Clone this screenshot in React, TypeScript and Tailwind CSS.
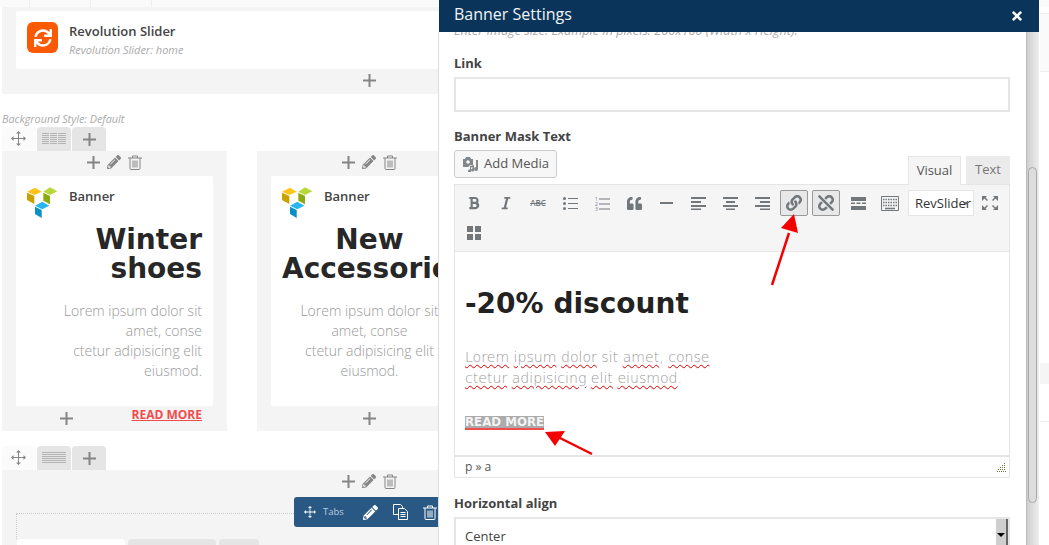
import type { ReactNode } from 'react'
import {
  FaBold,
  FaItalic,
  FaQuoteLeft,
  FaLink,
  FaUnlink,
  FaPencilAlt,
  FaSync,
  FaTimes,
} from 'react-icons/fa'

function Plus({ className = 'text-[#858585]' }: { className?: string }) {
  return (
    <svg width="13" height="13" viewBox="0 0 13 13" className={className}>
      <path d="M5.5 0h2v5.5H13v2H7.5V13h-2V7.5H0v-2h5.5z" fill="currentColor" />
    </svg>
  )
}

function Move({ color = '#858585', size = 15 }: { color?: string; size?: number }) {
  return (
    <svg width={size} height={size} viewBox="0 0 15 15" fill={color}>
      <path d="M7 2h1v11H7zM2 7h11v1H2z" />
      <path d="M7.5 0 10 2.5H5zM7.5 15 5 12.5h5zM0 7.5 2.5 5v5zM15 7.5 12.5 10V5z" />
    </svg>
  )
}

function Trash({ color = '#858585', size = 14 }: { color?: string; size?: number }) {
  return (
    <svg width={size} height={size + 1} viewBox="0 0 14 15" fill="none" stroke={color} strokeWidth="1">
      <path d="M0 3h14M4.5 3V1h5v2M2 3v10.5a1 1 0 0 0 1 1h8a1 1 0 0 0 1-1V3M5 5.5v7M7 5.5v7M9 5.5v7" />
    </svg>
  )
}

function Lines({ full }: { full?: boolean }) {
  return (
    <svg width="24" height="12" viewBox="0 0 24 12" fill="#b4b4b4">
      {[0, 2, 4, 6, 8, 10].map((y) => (
        <rect key={y} x="0" y={y} width="24" height="1" />
      ))}
      {!full && <path d="M7 0h1v12H7zM15 0h1v12h-1z" fill="#e5e5e5" />}
    </svg>
  )
}

function VcLogo() {
  return (
    <svg width="31" height="31" viewBox="0 0 31 31" className="shrink-0">
      <path d="M0 4.7 8 .7l6.7 4-7.4 3.3z" fill="#fcc419" />
      <path d="M0 5.7 7.3 9v8L0 13z" fill="#c9a200" />
      <path d="M16.3 4.7 23 .3l7.3 4L23 8z" fill="#b6d83a" />
      <path d="M16.3 5.7 23 9v8.3l-6.7-3.6z" fill="#8aab10" />
      <path d="m8 18.7 7.3-4 7 4-7 3.6z" fill="#29b6f0" />
      <path d="m8 19.7 6.7 3.3v8L8 27z" fill="#0a8fc5" />
    </svg>
  )
}

function ColumnTabs({ full }: { full?: boolean }) {
  return (
    <div className="flex h-[24px] gap-px">
      <div className="w-[34px] flex items-center justify-center pb-[2px] pr-[2px] bg-[#fbfbfb] rounded-t-sm">
        <Move />
      </div>
      <div className="w-[34px] flex items-center justify-center bg-[#e5e5e5] rounded-t-sm">
        <Lines full={full} />
      </div>
      <div className="w-[34px] flex items-center justify-center bg-[#e5e5e5] rounded-t-sm">
        <Plus />
      </div>
    </div>
  )
}

function ControlIcons() {
  return (
    <div className="flex items-center justify-center gap-[7px] h-[22px]">
      <Plus />
      <FaPencilAlt size={14} className="text-[#858585]" />
      <Trash />
    </div>
  )
}

function BannerColumn({
  title,
  align,
  plusClass,
  children,
}: {
  title: ReactNode
  align: string
  plusClass: string
  children?: ReactNode
}) {
  return (
    <div className="w-[225px] h-[280px] shrink-0 bg-[#f4f4f4] flex flex-col">
      <div className="h-[25px]">
        <ControlIcons />
      </div>
      <div className={`mx-[14px] h-[230px] bg-white rounded-[2px] px-[11px] pt-[11px] ${align}`}>
        <div className="flex items-center gap-[11px] h-[31px] text-left">
          <VcLogo />
          <span className="text-[13px] font-semibold text-[#444] relative -top-[6px]">Banner</span>
        </div>
        <h2 className="font-['DejaVu_Sans'] font-bold text-[28px] leading-[29px] text-[#272727] mt-[7px]">{title}</h2>
        <p className="mt-[18px] text-[14px] leading-[20px] font-light text-[#999]">
          Lorem ipsum dolor sit
          <br />
          amet, conse
          <br />
          ctetur adipisicing elit
          <br />
          eiusmod.
        </p>
        {children}
      </div>
      <div className={`flex pt-[6px] h-[25px] ${plusClass}`}>
        <Plus />
      </div>
    </div>
  )
}

type Tool = { icon: ReactNode; active?: boolean }

const tools: Tool[] = [
  { icon: <FaBold size={14} /> },
  { icon: <FaItalic size={14} /> },
  { icon: <span className="text-[8px] line-through font-semibold">ABC</span> },
  {
    icon: (
      <svg width="15" height="13" viewBox="0 0 15 13" fill="currentColor">
        <circle cx="1.500" cy="1.500" r="1.500" />
        <circle cx="1.500" cy="6.500" r="1.500" />
        <circle cx="1.500" cy="11.500" r="1.500" />
        <path d="M5 1h10v1H5zM5 6h10v1H5zM5 11h10v1H5z" />
      </svg>
    ),
  },
  {
    icon: (
      <svg width="15" height="15" viewBox="0 0 15 15" fill="currentColor">
        <text x="0" y="5" fontSize="5">1</text>
        <text x="0" y="10" fontSize="5">2</text>
        <text x="0" y="15" fontSize="5">3</text>
        <path d="M4 2.500h11v1H4zM4 7.500h11v1H4zM4 12.500h11v1H4z" />
      </svg>
    ),
  },
  { icon: <FaQuoteLeft size={15} /> },
  { icon: <span className="block w-[13px] h-[2px] bg-current" /> },
  {
    icon: (
      <svg width="15" height="13" viewBox="0 0 15 13" fill="currentColor">
        <path d="M0 0h15v2H0zM0 4h10v2H0zM0 8h15v2H0zM0 11.500h10v1.500H0z" />
      </svg>
    ),
  },
  {
    icon: (
      <svg width="15" height="13" viewBox="0 0 15 13" fill="currentColor">
        <path d="M0 0h15v2H0zM3 4h9v2H3zM0 8h15v2H0zM3 11.500h9v1.500H3z" />
      </svg>
    ),
  },
  {
    icon: (
      <svg width="15" height="13" viewBox="0 0 15 13" fill="currentColor">
        <path d="M0 0h15v2H0zM5 4h10v2H5zM0 8h15v2H0zM5 11.500h10v1.500H5z" />
      </svg>
    ),
  },
  { icon: <FaLink size={16} />, active: true },
  { icon: <FaUnlink size={16} />, active: true },
  {
    icon: (
      <svg width="15" height="13" viewBox="0 0 15 13" fill="currentColor">
        <path d="M0 0h15v4H0zM0 5.500h4v1.500H0zM5.500 5.500h4v1.500h-4zM11 5.500h4v1.500h-4zM0 9h15v4H0z" />
      </svg>
    ),
  },
  {
    icon: (
      <svg width="18" height="15" viewBox="0 0 18 15" fill="none" stroke="currentColor">
        <path d="M.5.500h17v14H.5z" />
        <path d="M2 3.500h14M2 6.500h14M2 9.500h14" strokeDasharray="1.500 1" strokeWidth="1.500" />
        <path d="M4 12.500h10" strokeWidth="1.500" />
      </svg>
    ),
  },
]

function Toolbar() {
  return (
    <div className="h-[68px] bg-[#f5f5f5] border border-[#e5e5e5] pl-[5px] pt-[5px] flex flex-wrap content-start gap-x-[4px] gap-y-[4px] text-[#72777c]">
      {tools.map((tool, i) => (
        <div
          key={i}
          className={`w-[28px] h-[26px] flex items-center justify-center rounded-[2px] ${
            tool.active ? 'border border-[#999] bg-[#e8e8e8]' : ''
          }`}
        >
          {tool.icon}
        </div>
      ))}
      <div className="relative w-[66px] h-[26px] bg-white border border-[#e5e5e5] text-[13px] leading-[24px] text-[#333] pl-[6px] overflow-hidden whitespace-nowrap">
        RevSlider
        <div className="absolute right-[4px] top-[11px] w-0 h-0 border-x-[3px] border-x-transparent border-t-[3px] border-t-[#666]" />
      </div>
      <div className="w-[28px] h-[26px] -ml-[2px] flex items-center justify-center">
        <svg width="16" height="14" viewBox="0 0 16 14" fill="currentColor">
          <path d="M0 0h5L3.500 1.500 6 4 5 5 2.500 2.500 0 5zM16 0h-5l1.500 1.500L10 4l1 1 2.500-2.500L16 5zM0 14h5l-1.500-1.500L6 10 5 9l-2.500 2.500L0 9zM16 14h-5l1.500-1.500L10 10l1-1 2.500 2.500L16 9z" />
        </svg>
      </div>
      <div className="w-[28px] h-[26px] flex items-center justify-center">
        <svg width="14" height="14" viewBox="0 0 14 14" fill="currentColor">
          <path d="M0 0h6v6H0zM8 0h6v6H8zM0 8h6v6H0zM8 8h6v6H8z" />
        </svg>
      </div>
    </div>
  )
}

function Misspelled({ children }: { children: ReactNode }) {
  return <span className="underline decoration-wavy decoration-[#e00000] decoration-1 underline-offset-2">{children}</span>
}

function BannerModal() {
  return (
    <div className="absolute left-[438px] top-0 w-[601px] h-[545px] flex flex-col">
      <div className="h-[32px] ml-px bg-[#0a3459] flex items-center justify-between pl-[15px] pr-[15px] pb-[5px] shrink-0 relative z-10">
        <span className="text-[16px] text-[#f0f4f8]">Banner Settings</span>
        <FaTimes size={14} className="text-white relative top-[2px]" />
      </div>
      <div className="flex flex-1 min-h-0">
        <div className="w-[588px] bg-white border-l border-[#dddddd] overflow-hidden px-[15px]">
          <p className="-mt-[9px] text-[12.7px] leading-[15px] italic text-[#aaa] whitespace-nowrap">
            Enter image size. Example in pixels: 200x100 (Width x Height).
          </p>
          <label className="block mt-[16px] text-[13px] leading-[18px] font-bold text-[#444]">Link</label>
          <div className="mt-[5px] h-[35px] border-2 border-[#e6e6e6] w-[556px]" />
          <label className="block mt-[15px] text-[13px] leading-[18px] font-bold text-[#444]">Banner Mask Text</label>
          <div className="w-[556px] flex justify-between h-[34px] mt-[5px]">
            <div className="h-[28px] w-[103px] border border-[#cccccc] bg-[#f7f7f7] rounded-[3px] flex items-center justify-center gap-[5px] text-[13px] text-[#555]">
              <svg width="17" height="16" viewBox="0 0 17 16" fill="#82878c">
                <path d="M1 3h2l1-2h4l1 2h2v6H8.500a3 3 0 0 0-2 2H1z" />
                <circle cx="6" cy="6" r="1.800" fill="#f7f7f7" />
                <path d="M14 4h2v9a2 2 0 1 1-2-2zM8 10l4-1v5a1.500 1.500 0 1 1-1.500-1.500V11l-1.500.4V15a1.500 1.500 0 1 1-1-1.400z" />
              </svg>
              Add Media
            </div>
            <div className="flex items-end gap-[5px] text-[13px]">
              <div className="w-[53px] h-[29px] bg-[#f5f5f5] border border-[#e5e5e5] border-b-0 flex items-center justify-center text-[#555] relative top-px z-10">
                Visual
              </div>
              <div className="w-[44px] h-[28px] bg-[#ebebeb] flex items-center justify-center text-[#777]">Text</div>
            </div>
          </div>
          <div className="w-[556px]">
            <Toolbar />
            <div className="h-[203px] border-x border-[#e5e5e5] px-[10px] pt-[34px]">
              <h1 className="font-['DejaVu_Sans'] font-bold text-[28px] leading-[36px] text-[#222]">-20% discount</h1>
              <p className="mt-[25px] text-[14.1px] leading-[21px] font-['DejaVu_Sans'] font-extralight text-[#999]">
                <Misspelled>Lorem</Misspelled> <Misspelled>ipsum</Misspelled> <Misspelled>dolor</Misspelled> sit{' '}
                <Misspelled>amet</Misspelled>, <Misspelled>conse</Misspelled>
                <br />
                <Misspelled>ctetur</Misspelled> <Misspelled>adipisicing</Misspelled> <Misspelled>elit</Misspelled>{' '}
                <Misspelled>eiusmod</Misspelled>.
              </p>
              <div className="mt-[27px] w-fit bg-[#ababab] text-[#f4f4f4] font-['DejaVu_Sans'] font-bold text-[11.8px] border-b-2 border-[#f04c4c] leading-[12px]">
                READ MORE
              </div>
            </div>
            <div className="h-[23px] border border-[#e5e5e5] border-t-2 flex items-center justify-between pl-[10px] pr-[3px] text-[12px] text-[#555]">
              <span>p » a</span>
              <svg width="9" height="9" viewBox="0 0 9 9" fill="#6b7a3a">
                {[
                  [7, 0],
                  [5, 2],
                  [7, 2],
                  [3, 4],
                  [5, 4],
                  [7, 4],
                  [1, 6],
                  [3, 6],
                  [5, 6],
                  [7, 6],
                  [0, 8],
                  [2, 8],
                  [4, 8],
                  [6, 8],
                  [8, 8],
                ].map(([x, y]) => (
                  <rect key={`${x}-${y}`} x={x} y={y} width="1" height="1" />
                ))}
              </svg>
            </div>
          </div>
          <label className="block mt-[16px] text-[13px] leading-[18px] font-bold text-[#444]">Horizontal align</label>
          <div className="relative mt-[5px] h-[40px] w-[556px] border-2 border-[#e6e6e6] pl-[9px] pt-[8px] text-[13px] text-[#444]">
            Center
            <div className="absolute right-0 top-0 bottom-0 w-[12px] bg-[#cfcfcf] border-r-2 border-[#666] flex justify-center pt-[14px]">
              <div className="w-0 h-0 border-x-[4px] border-x-transparent border-t-[4px] border-t-black" />
            </div>
          </div>
        </div>
        <div className="w-[13px] bg-linear-to-r from-[#cfcfcf] to-[#eeeeee] border-l border-[#bbbbbb] pt-[135px] pl-px pr-[2px]">
          <div className="h-[336px] rounded-[5px] bg-[#dddddd] border border-[#a8a8a8]" />
        </div>
      </div>
    </div>
  )
}

export default function App() {
  return (
    <div className="relative w-[1049px] h-[545px] overflow-hidden bg-white font-['Open_Sans',sans-serif]">
      <div className="h-[7px] bg-[#fafafa] flex">
        <div className="w-[30px] border-r border-[#eeeeee]" />
        <div className="w-[61px] border-r border-[#eeeeee]" />
        <div className="w-[61px] border-r border-[#eeeeee]" />
      </div>
      <div className="ml-[2px] w-[734px] h-[87px] bg-[#f4f4f4] px-[14px] pt-[4px]">
        <div className="h-[58px] bg-white rounded-[2px] flex items-start pl-[11px] pt-[11px] gap-[11px]">
          <div className="w-[31px] h-[31px] rounded-[6px] bg-[#fb5a04] flex items-center justify-center text-white">
            <FaSync size={18} />
          </div>
          <div>
            <div className="text-[13px] leading-[18px] font-semibold text-[#444]">Revolution Slider</div>
            <div className="text-[11px] leading-[14px] mt-[3px] italic text-[#aaa]">Revolution Slider: home</div>
          </div>
        </div>
        <div className="flex justify-center pt-[5px]">
          <Plus />
        </div>
      </div>
      <div className="ml-[2px] mt-[18px] text-[10.8px] leading-[14px] italic text-[#aaa]">Background Style: Default</div>
      <div className="ml-[2px] mt-[1px]">
        <ColumnTabs />
      </div>
      <div className="ml-[2px] flex gap-[30px]">
        <BannerColumn title={<>Winter<br />shoes</>} align="text-right" plusClass="pl-[58px]">
          <div className="mt-[26px] text-[12px] leading-[16px] font-bold text-[#f04c4c] underline">READ MORE</div>
        </BannerColumn>
        <BannerColumn title={<>New<br />Accessories</>} align="text-center" plusClass="justify-center" />
      </div>
      <div className="ml-[2px] mt-[15px]">
        <ColumnTabs full />
      </div>
      <div className="relative ml-[2px] w-[734px] h-[75px] bg-[#f4f4f4]">
        <ControlIcons />
        <div className="mx-[14px] mt-[21px] h-[26px] border-t border-l border-dotted border-[#cccccc] pt-[25px] flex gap-[3px]">
          <div className="w-[108px] h-[10px] bg-white rounded-t-sm" />
          <div className="w-[88px] h-[10px] bg-[#e5e5e5] rounded-t-sm" />
          <div className="w-[40px] h-[10px] bg-[#e5e5e5] rounded-t-sm" />
        </div>
        <div className="absolute left-[292px] top-[27px] w-[180px] h-[30px] bg-[#2a5885] rounded-l-[3px] flex items-center pl-[10px] text-white">
          <Move color="#ffffff" size={12} />
          <span className="ml-[7px] text-[9.5px] text-[#b5cde2]">Tabs</span>
          <FaPencilAlt size={15} className="ml-[19px]" />
          <svg width="15" height="16" viewBox="0 0 15 16" fill="none" stroke="#ffffff" className="ml-[15px]">
            <path d="M.5.500h7l2 2v8h-9z" fill="#2a5885" />
            <path d="M5.500 4.500h6l3 3v8h-9z" fill="#2a5885" />
            <path d="M7.500 8.500h5M7.500 10.500h5M7.500 12.500h5" />
          </svg>
          <span className="ml-[15px]">
            <Trash color="#ffffff" />
          </span>
        </div>
      </div>

      <div className="absolute left-[1040px] top-[13px] w-[9px] h-[59px] bg-[#fafafa] border-y border-[#eeeeee]" />
      <div className="absolute left-[1040px] top-[363px] w-[9px] h-[59px] border-b border-[#eeeeee]">
        <div className="h-[21px] bg-[#f5f5f5]" />
      </div>

      <BannerModal />

      {/* red annotation arrows */}
      <svg className="absolute inset-0 pointer-events-none z-20" width="1049" height="545" viewBox="0 0 1049 545">
        <path d="m772 285 17-52" stroke="#f40000" strokeWidth="2.500" fill="none" />
        <path d="m794 214 4 19-17-5z" fill="#f40000" />
        <path d="m592 454-34-17" stroke="#f40000" strokeWidth="2.500" fill="none" />
        <path d="m545 432 20-1-10 15z" fill="#f40000" />
      </svg>
    </div>
  )
}
